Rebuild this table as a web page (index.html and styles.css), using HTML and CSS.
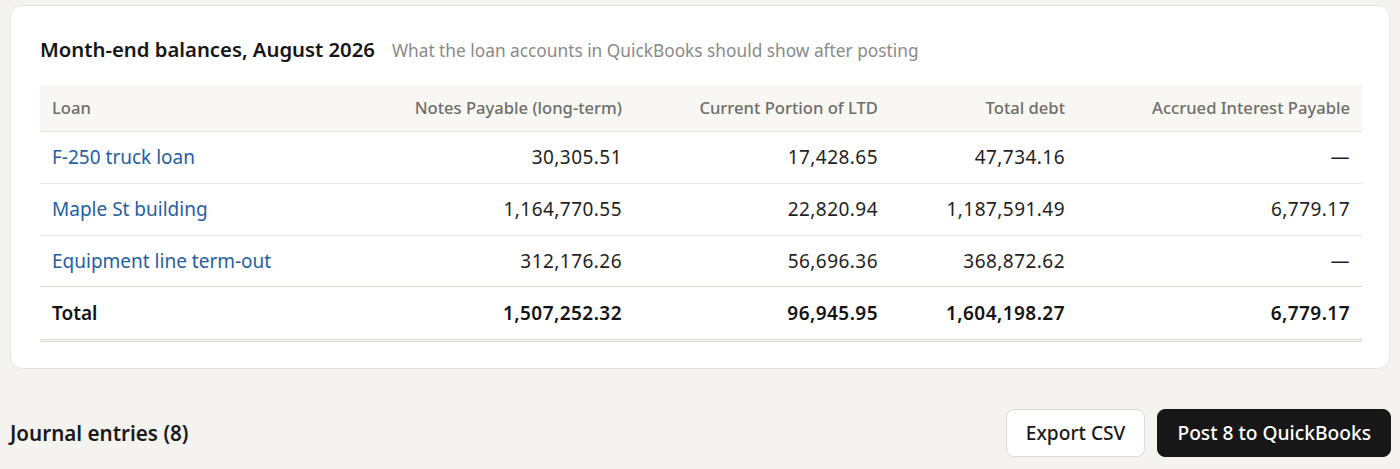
FILE: index.html
```html
<!DOCTYPE html>
<html lang="en">
<head>
<meta charset="utf-8">
<title>Month-end balances</title>
<link rel="stylesheet" href="styles.css">
</head>
<body>
<main class="page">
  <section class="card">
    <header class="card-head">
      <h2 class="card-title">Month-end balances, August 2026</h2>
      <p class="card-sub">What the loan accounts in QuickBooks should show after posting</p>
    </header>
    <table class="balances">
      <colgroup>
        <col class="c-loan">
        <col class="c-notes">
        <col class="c-cur">
        <col class="c-total">
        <col class="c-acc">
      </colgroup>
      <thead>
        <tr>
          <th class="left">Loan</th>
          <th>Notes Payable (long-term)</th>
          <th>Current Portion of LTD</th>
          <th>Total debt</th>
          <th>Accrued Interest Payable</th>
        </tr>
      </thead>
      <tbody>
        <tr>
          <td class="left"><a class="loan-link" href="#">F-250 truck loan</a></td>
          <td class="num">30,305.51</td>
          <td class="num">17,428.65</td>
          <td class="num">47,734.16</td>
          <td class="num">—</td>
        </tr>
        <tr>
          <td class="left"><a class="loan-link" href="#">Maple St building</a></td>
          <td class="num">1,164,770.55</td>
          <td class="num">22,820.94</td>
          <td class="num">1,187,591.49</td>
          <td class="num">6,779.17</td>
        </tr>
        <tr>
          <td class="left"><a class="loan-link" href="#">Equipment line term-out</a></td>
          <td class="num">312,176.26</td>
          <td class="num">56,696.36</td>
          <td class="num">368,872.62</td>
          <td class="num">—</td>
        </tr>
      </tbody>
      <tfoot>
        <tr>
          <td class="left">Total</td>
          <td class="num">1,507,252.32</td>
          <td class="num">96,945.95</td>
          <td class="num">1,604,198.27</td>
          <td class="num">6,779.17</td>
        </tr>
      </tfoot>
    </table>
  </section>

  <section class="journal-bar">
    <h3 class="journal-title">Journal entries (8)</h3>
    <div class="actions">
      <button class="btn btn-secondary" type="button">Export CSV</button>
      <button class="btn btn-primary" type="button">Post 8 to QuickBooks</button>
    </div>
  </section>
</main>
</body>
</html>
```

FILE: styles.css
```css
* { box-sizing: border-box; }

html, body {
  margin: 0;
  padding: 0;
  background: #f4f3ef;
  font-family: "Noto Sans", "DejaVu Sans", sans-serif;
  color: #1a1a1a;
}

.page {
  padding: 5px 9px 0 10px;
  width: 1400px;
}

.card {
  background: #ffffff;
  border: 1px solid #e6e4de;
  border-radius: 12px;
  padding: 28px 27px 26px 29px;
  margin-right: 1px;
}

.card-head {
  display: flex;
  align-items: baseline;
  gap: 17px;
  margin-bottom: 21px;
}

.card-title {
  margin: 0;
  font-size: 20.3px;
  font-weight: 600;
  line-height: 30px;
  color: #161616;
}

.card-sub {
  margin: 0;
  font-size: 17.3px;
  line-height: 24px;
  color: #8a8a87;
}

.balances {
  width: 100%;
  border-collapse: collapse;
  table-layout: fixed;
}

.c-loan { width: 290px; }
.c-notes { width: 304px; }
.c-cur { width: 256px; }
.c-total { width: 187px; }
.c-acc { width: 285px; }

.balances th,
.balances td {
  padding: 0 12px;
  text-align: right;
  white-space: nowrap;
}

.balances .left { text-align: left; }

.balances .num { letter-spacing: 0.45px; }

.balances thead th {
  background: #f8f7f3;
  height: 46px;
  font-size: 16.6px;
  font-weight: 500;
  color: #6e6e6b;
  border-bottom: 1px solid #e3e1db;
}

.balances tbody td {
  height: 52px;
  font-size: 19px;
  color: #1f1f1f;
  border-bottom: 1px solid #e8e6e1;
}

.balances tbody tr:last-child td {
  height: 51px;
  border-bottom: 1px solid #d6d4cd;
}

.loan-link {
  color: #245ea3;
  text-decoration: none;
}

.balances tfoot td {
  height: 54px;
  font-size: 19px;
  font-weight: 600;
  color: #141414;
  border-bottom: 3px double #d6d4cd;
}

.journal-bar {
  display: flex;
  align-items: center;
  justify-content: space-between;
  margin-top: 40px;
}

.journal-title {
  margin: 0;
  font-size: 20.6px;
  font-weight: 600;
  color: #1a1a1a;
}

.actions {
  display: flex;
  gap: 12px;
}

.btn {
  height: 48px;
  padding: 0 19px;
  border-radius: 8px;
  font-family: inherit;
  font-size: 19.2px;
  font-weight: 500;
  cursor: pointer;
}

.btn-secondary {
  background: #ffffff;
  color: #1a1a1a;
  border: 1px solid #dcdad3;
}

.btn-primary {
  background: #171717;
  color: #ffffff;
  border: 1px solid #171717;
}
```
